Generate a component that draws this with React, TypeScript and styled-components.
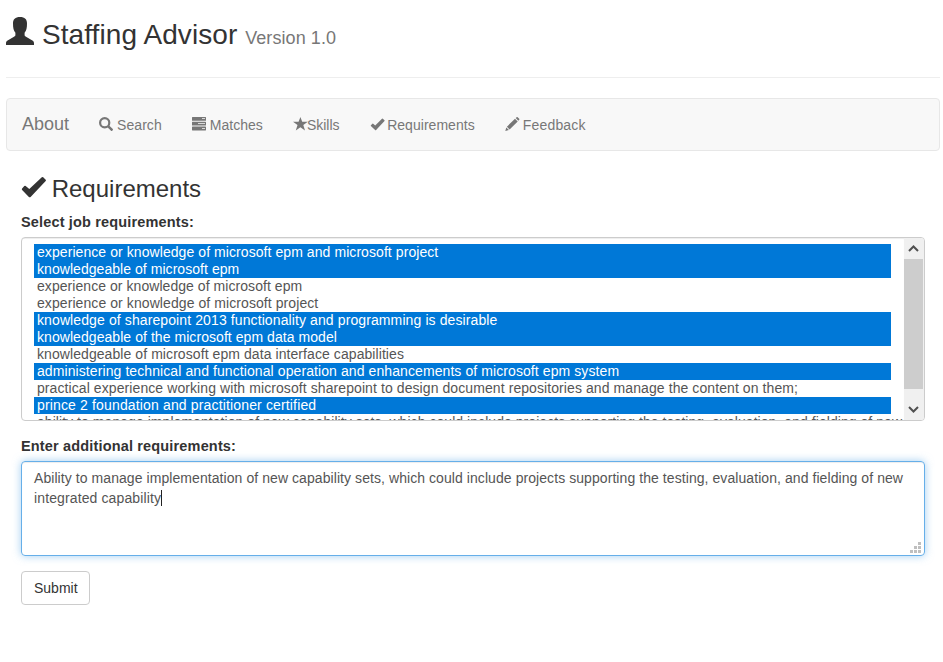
import React from "react";
import styled, { createGlobalStyle } from "styled-components";

const GlobalStyle = createGlobalStyle`
  *, *::before, *::after { box-sizing: border-box; }
  body {
    margin: 0;
    background: #fff;
    color: #333;
    font-family: "Liberation Sans", Arial, sans-serif;
    font-size: 14px;
    line-height: 20px;
  }
`;

const Page = styled.div`
  padding: 0 3px 0 6px;
`;

const PageHeader = styled.header`
  height: 78px;
  padding-top: 17px;
  margin-bottom: 20px;
  border-bottom: 1px solid #eee;
  display: flex;
  align-items: flex-start;
`;

const Title = styled.h1`
  margin: 2px 0 0 8px;
  font-size: 28px;
  font-weight: 400;
  line-height: 32px;
  letter-spacing: 0.08px;
  white-space: nowrap;
`;

const Version = styled.small`
  font-size: 18px;
  letter-spacing: 0.08px;
  line-height: 1;
  color: #777;
`;

const Glyph = styled.svg<{ $size: number }>`
  display: block;
  flex: none;
  width: ${(p) => p.$size}px;
  height: ${(p) => p.$size}px;
  fill: currentColor;
  overflow: visible;
`;

const Navbar = styled.nav`
  display: flex;
  align-items: center;
  gap: 30px;
  height: 53px;
  padding: 0 15px;
  border: 1px solid #e7e7e7;
  border-radius: 4px;
  background: #f8f8f8;
  color: #777;
`;

const Brand = styled.a`
  font-size: 18px;
  line-height: 20px;
  padding-bottom: 2px;
`;

const NavLink = styled.a<{ $gap?: number; $tracking?: number }>`
  display: flex;
  align-items: center;
  gap: ${(p) => p.$gap ?? 4}px;
  line-height: 20px;
  letter-spacing: ${(p) => p.$tracking ?? 0}px;
  white-space: nowrap;
  ${Glyph} { margin-top: -1px; }
`;

const Content = styled.main`
  padding: 0 15px;
`;

const SectionTitle = styled.h2`
  display: flex;
  gap: 6.7px;
  height: 26px;
  margin: 25px 0 10px;
  font-size: 24px;
  font-weight: 400;
  line-height: 26px;
`;

const Label = styled.label`
  display: block;
  height: 20px;
  margin-bottom: 5px;
  font-size: 14.5px;
  font-weight: 700;
  line-height: 20px;
  letter-spacing: 0.16px;
`;

const ListBox = styled.div`
  display: flex;
  height: 184px;
  margin-bottom: 15px;
  border: 1px solid #ccc;
  border-radius: 4px;
  overflow: hidden;
`;

const Options = styled.div`
  flex: 1;
  min-width: 0;
  padding: 6px 13px 0 12px;
  overflow: hidden;
  box-shadow: inset 0 1px 1px rgba(0, 0, 0, 0.075);
`;

const Option = styled.div<{ $selected?: boolean; $tracking: number }>`
  height: 17px;
  padding-left: 3px;
  line-height: 17px;
  letter-spacing: ${(p) => p.$tracking}px;
  white-space: nowrap;
  color: ${(p) => (p.$selected ? "#fff" : "#555")};
  background: ${(p) => (p.$selected ? "#0078d7" : "transparent")};
`;

const Scrollbar = styled.div`
  display: flex;
  flex-direction: column;
  width: 20px;
  padding-right: 1px;
  background: #f0f0f0;
  color: #505050;
`;

const ScrollButton = styled.div`
  display: flex;
  align-items: center;
  justify-content: center;
  height: 21px;
`;

const Chevron = styled.svg`
  width: 11px;
  height: 7px;
  fill: none;
  stroke: currentColor;
  stroke-width: 2;
`;

const ScrollThumb = styled.div`
  height: 130px;
  background: #cdcdcd;
`;

const ScrollTrack = styled.div`
  flex: 1;
`;

const TextBox = styled.div`
  position: relative;
  height: 95px;
  margin-bottom: 15px;
  padding: 6px 12px;
  border: 1px solid #66afe9;
  border-radius: 4px;
  color: #555;
  box-shadow: inset 0 1px 1px rgba(0, 0, 0, 0.075),
    0 0 8px rgba(102, 175, 233, 0.6);
`;

const TextLine = styled.div<{ $tracking: number }>`
  display: flex;
  align-items: center;
  height: 20px;
  white-space: nowrap;
  letter-spacing: ${(p) => p.$tracking}px;
`;

const Caret = styled.span`
  width: 1px;
  height: 16px;
  background: #222;
`;

const ResizeGrip = styled.svg`
  position: absolute;
  right: 3px;
  bottom: 2px;
  width: 11px;
  height: 11px;
  fill: #bfbfbf;
`;

const SubmitButton = styled.button`
  display: block;
  width: 69px;
  height: 34px;
  padding: 6px 12px;
  border: 1px solid #ccc;
  border-radius: 4px;
  background: #fff;
  color: #333;
  font: 14px/20px "Liberation Sans", Arial, sans-serif;
`;

const UserIcon = () => (
  <Glyph $size={28} viewBox="0 0 28 28">
    <path d="M14 0C18.8 0 21 2.4 21 6.4C21 10.6 20.4 13.6 18.6 15.8V17.8C18.6 18.8 19 19.3 20 19.8L26.4 23.4C27.6 24.2 28 25 28 26.2V28H0V26.2C0 25 .4 24.2 1.6 23.4L8 19.8C9 19.3 9.4 18.8 9.4 17.8V15.8C7.6 13.6 7 10.6 7 6.4C7 2.4 9.2 0 14 0Z" />
  </Glyph>
);

const SearchIcon = () => (
  <Glyph $size={14} viewBox="0 0 14 14">
    <circle cx="5.7" cy="5.7" r="4.6" fill="none" stroke="currentColor" strokeWidth="2.2" />
    <path d="M8.2 9.9L9.9 8.2L13.8 12Q14.2 12.6 13.7 13.2L13.2 13.7Q12.6 14.2 12 13.8Z" />
  </Glyph>
);

const TasksIcon = () => (
  <Glyph $size={14} viewBox="0 0 14 14">
    <path
      fillRule="evenodd"
      d="M.4 0H13.6Q14 0 14 .4V3.4Q14 3.8 13.6 3.8H.4Q0 3.8 0 3.4V.4Q0 0 .4 0ZM10 1.3V1.9H13V1.3Z
         M.4 4.8H13.6Q14 4.8 14 5.2V8.2Q14 8.6 13.6 8.6H.4Q0 8.6 0 8.2V5.2Q0 4.8 .4 4.8ZM6 6.2V6.9H13V6.2Z
         M.4 9.6H13.6Q14 9.6 14 10V13Q14 13.4 13.6 13.4H.4Q0 13.4 0 13V10Q0 9.6 .4 9.6ZM10 11V11.7H13V11Z"
    />
  </Glyph>
);

const StarIcon = () => (
  <Glyph $size={14} viewBox="0 0 14 14">
    <path d="M7.4 -.1L9.2 4.8H14.8L10.3 8.1L12 13.4L7.4 10.2L2.8 13.4L4.5 8.1L0 4.8H5.6Z" />
  </Glyph>
);

const CheckIcon = ({ size }: { size: number }) => (
  <Glyph $size={size} viewBox="0 0 24 24">
    <path d="M1.1 12.6L3.3 10.1Q4 9.5 4.7 10L8.3 13.1L20.8 1.2Q21.5.6 22.2 1.2L24.7 3.7Q25.3 4.3 24.7 5L9.6 20.9Q8.7 21.7 7.9 20.9L1.1 14Q.5 13.3 1.1 12.6Z" />
  </Glyph>
);

const NavCheckIcon = () => (
  <Glyph $size={14} viewBox="0 0 14 14">
    <path d="M.9 8.2L2.4 6.7Q2.8 6.4 3.2 6.7L5.2 8.4L12 1.7Q12.4 1.4 12.8 1.7L14.5 3.3Q14.8 3.7 14.5 4.1L6.1 13Q5.6 13.4 5.1 13L.9 9Q.6 8.6 .9 8.2Z" />
  </Glyph>
);

const PencilIcon = () => (
  <Glyph $size={14} viewBox="0 0 14 14">
    <path d="M10.7 1L11.6.2Q12.1-.3 12.7.2L14.2 1.7Q14.7 2.3 14.2 2.8L13.3 3.7ZM10 1.7L12.7 4.4L4.6 12.4L1.9 9.7ZM1.3 10.4L3.9 13L.3 14Z" />
  </Glyph>
);

const requirements = [
  { text: "experience or knowledge of microsoft epm and microsoft project", selected: true, tracking: 0.072 },
  { text: "knowledgeable of microsoft epm", selected: true, tracking: 0.05 },
  { text: "experience or knowledge of microsoft epm", tracking: 0.055 },
  { text: "experience or knowledge of microsoft project", tracking: 0.08 },
  { text: "knowledge of sharepoint 2013 functionality and programming is desirable", selected: true, tracking: 0.106 },
  { text: "knowledgeable of the microsoft epm data model", selected: true, tracking: 0.06 },
  { text: "knowledgeable of microsoft epm data interface capabilities", tracking: 0.075 },
  { text: "administering technical and functional operation and enhancements of microsoft epm system", selected: true, tracking: 0.088 },
  { text: "practical experience working with microsoft sharepoint to design document repositories and manage the content on them;", tracking: 0.085 },
  { text: "prince 2 foundation and practitioner certified", selected: true, tracking: 0.15 },
  { text: "ability to manage implementation of new capability sets, which could include projects supporting the testing, evaluation, and fielding of new", tracking: 0.053 },
];

export default function App() {
  return (
    <Page>
      <GlobalStyle />
      <PageHeader>
        <UserIcon />
        <Title>
          Staffing Advisor <Version>Version 1.0</Version>
        </Title>
      </PageHeader>
      <Navbar>
        <Brand>About</Brand>
        <NavLink $tracking={0.06}><SearchIcon />Search</NavLink>
        <NavLink $tracking={0.03}><TasksIcon />Matches</NavLink>
        <NavLink $gap={0}><StarIcon />Skills</NavLink>
        <NavLink $gap={3.6} $tracking={0.03}><NavCheckIcon />Requirements</NavLink>
        <NavLink $tracking={0.2}><PencilIcon />Feedback</NavLink>
      </Navbar>
      <Content>
        <SectionTitle><CheckIcon size={24} />Requirements</SectionTitle>
        <Label>Select job requirements:</Label>
        <ListBox>
          <Options>
            {requirements.map((r) => (
              <Option key={r.text} $selected={r.selected} $tracking={r.tracking}>
                {r.text}
              </Option>
            ))}
          </Options>
          <Scrollbar>
            <ScrollButton>
              <Chevron viewBox="0 0 11 7"><path d="M1 6L5.5 1.5L10 6" /></Chevron>
            </ScrollButton>
            <ScrollThumb />
            <ScrollTrack />
            <ScrollButton>
              <Chevron viewBox="0 0 11 7"><path d="M1 1L5.5 5.5L10 1" /></Chevron>
            </ScrollButton>
          </Scrollbar>
        </ListBox>
        <Label>Enter additional requirements:</Label>
        <TextBox>
          <TextLine $tracking={0.07}>
            Ability to manage implementation of new capability sets, which could include projects supporting the testing, evaluation, and fielding of new
          </TextLine>
          <TextLine $tracking={0.12}>
            integrated capability<Caret />
          </TextLine>
          <ResizeGrip viewBox="0 0 11 11">
            <path d="M8 0h3v3h-3zM4 4h3v3h-3zM8 4h3v3h-3zM0 8h3v3h-3zM4 8h3v3h-3zM8 8h3v3h-3z" />
          </ResizeGrip>
        </TextBox>
        <SubmitButton>Submit</SubmitButton>
      </Content>
    </Page>
  );
}
